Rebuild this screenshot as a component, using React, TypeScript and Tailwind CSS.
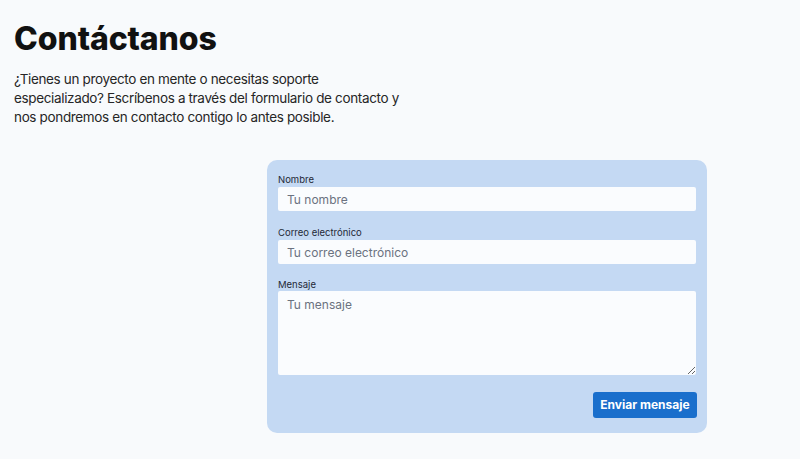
export default function App() {
  return (
    <div
      className="min-h-screen bg-[#f8fafc] text-[#1f2937]"
      style={{ fontFamily: 'Inter, "Noto Sans", sans-serif' }}
    >
      <div className="px-[14px] pt-[19px]">
        <h1 className="text-[32px] font-extrabold leading-[40px] tracking-[-0.1px] text-[#111111]">
          Contáctanos
        </h1>
        <p className="mt-[11px] w-[392px] text-[13.5px] leading-[19px] tracking-[-0.35px] text-[#262626]">
          ¿Tienes un proyecto en mente o necesitas soporte especializado? Escríbenos a través del
          formulario de contacto y nos pondremos en contacto contigo lo antes posible.
        </p>
      </div>

      <div className="mt-[33px] flex pl-[267px]">
        <form
          className="flex w-[440px] flex-col rounded-[10px] bg-[#c4d9f3] px-[11px] pb-[15px] pt-[13px]"
          onSubmit={(e) => e.preventDefault()}
        >
          <label className="mb-[1px] text-[9.5px] leading-[13px] text-[#1f2937]">Nombre</label>
          <input
            type="text"
            placeholder="Tu nombre"
            className="h-[24px] rounded-[2px] bg-[#fafcfe] px-[9px] text-[12px] text-[#1f2937] placeholder-[#6b7280] outline-none"
          />

          <label className="mb-[1px] mt-[15px] text-[9.5px] leading-[13px] text-[#1f2937]">
            Correo electrónico
          </label>
          <input
            type="email"
            placeholder="Tu correo electrónico"
            className="h-[24px] rounded-[2px] bg-[#fafcfe] px-[9px] text-[12px] text-[#1f2937] placeholder-[#6b7280] outline-none"
          />

          <label className="mb-[0px] mt-[14px] text-[9.5px] leading-[13px] text-[#1f2937]">
            Mensaje
          </label>
          <textarea
            placeholder="Tu mensaje"
            className="h-[84px] rounded-[2px] bg-[#fafcfe] px-[9px] py-[5px] text-[12px] text-[#1f2937] placeholder-[#6b7280] outline-none"
          />

          <div className="mt-[17px] flex justify-end">
            <button
              type="submit"
              className="mr-[-1px] h-[26px] w-[104px] rounded-[3px] bg-[#1a6fcc] text-[12px] font-bold text-white"
            >
              Enviar mensaje
            </button>
          </div>
        </form>
      </div>
    </div>
  );
}
